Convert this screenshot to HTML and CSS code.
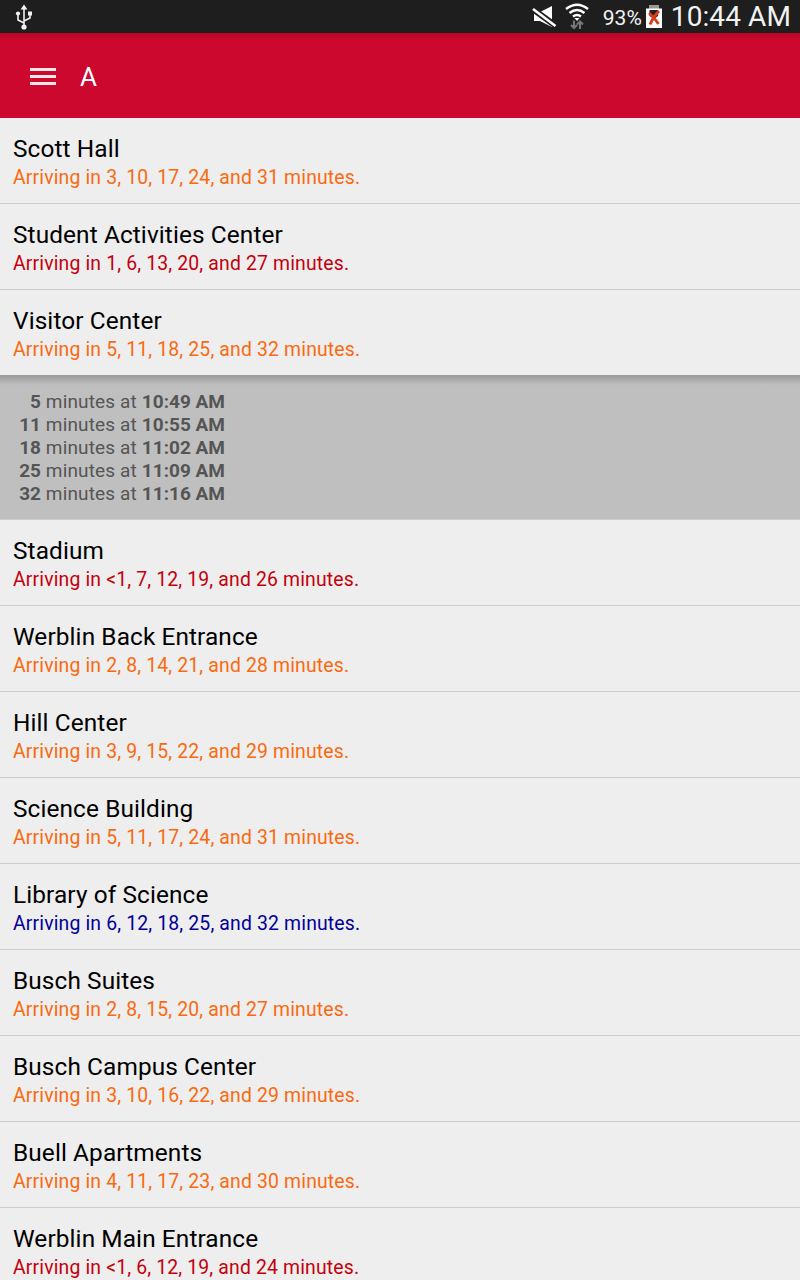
FILE: index.html
```
<!DOCTYPE html>
<html lang="en">
<head>
  <meta charset="utf-8">
  <title>A</title>
  <link rel="stylesheet" href="styles.css">
</head>
<body>
  <div class="status-bar">
    <svg class="usb" width="18" height="26" viewBox="0 0 18 26" fill="none" stroke="#f2f2f2" stroke-width="1.6">
      <path d="M9 4v18M9 19L3 16v-6M9 17l6-3v-5"/>
      <path d="M5.500 5.500L9 .5l3.500 5z" fill="#f2f2f2" stroke="none"/>
      <circle cx="3" cy="9.500" r="2.100" fill="#f2f2f2" stroke="none"/>
      <path d="M13 7.500h4v4h-4z" fill="#f2f2f2" stroke="none"/>
      <circle cx="9" cy="23" r="2.600" fill="#f2f2f2" stroke="none"/>
    </svg>
    <svg class="mute" width="26" height="24" viewBox="0 0 26 24">
      <path d="M3 7h6l12-6v21L9 16H3z" fill="#fff"/>
      <path d="M1 3.500l24 17.500" stroke="#1e1e1e" stroke-width="6"/>
      <path d="M2 4l22.500 17" stroke="#fff" stroke-width="2.600"/>
    </svg>
    <svg class="wifi" width="24" height="28" viewBox="0 0 24 28" fill="none" stroke="#fff" stroke-width="2.400">
      <path d="M1 6q11-8.500 22 0M4.500 10q7.500-6 15 0M8 13.500q4-3 8 0"/>
      <path d="M9.500 15h5L12 18z" fill="#fff" stroke="none"/>
      <path d="M9 17.500v7M6 22l3 3 3-3M15 26v-7M12 21.500l3-3 3 3" stroke="#777" stroke-width="2"/>
    </svg>
    <span class="percent">93%</span>
    <svg class="battery" width="16" height="24" viewBox="0 0 16 24">
      <path d="M3 0h10v4H3z" fill="#999"/>
      <path d="M0 3.500h16v19.500H0z" fill="#fff"/>
      <path d="M3.500 5h8.500v6l-4 3-4.500-3z" fill="#222"/>
      <path d="M3 8q6 5 9.500 11M13 6Q7 12 4 19.500" fill="none" stroke="#dc3a1c" stroke-width="2.800"/>
    </svg>
    <span class="clock">10:44 AM</span>
  </div>
  <div class="toolbar">
    <div class="menu-icon"><span></span><span></span><span></span></div>
    <h1>A</h1>
  </div>
  <ul class="stops">
    <li class="stop"><h2>Scott Hall</h2><p class="soon">Arriving in 3, 10, 17, 24, and 31 minutes.</p></li>
    <li class="stop"><h2>Student Activities Center</h2><p class="now">Arriving in 1, 6, 13, 20, and 27 minutes.</p></li>
    <li class="stop expanded"><h2>Visitor Center</h2><p class="soon">Arriving in 5, 11, 18, 25, and 32 minutes.</p></li>
    <li class="times">
      <div><b class="mins">5</b> minutes at <b>10:49 AM</b></div>
      <div><b class="mins">11</b> minutes at <b>10:55 AM</b></div>
      <div><b class="mins">18</b> minutes at <b>11:02 AM</b></div>
      <div><b class="mins">25</b> minutes at <b>11:09 AM</b></div>
      <div><b class="mins">32</b> minutes at <b>11:16 AM</b></div>
    </li>
    <li class="stop"><h2>Stadium</h2><p class="now">Arriving in &lt;1, 7, 12, 19, and 26 minutes.</p></li>
    <li class="stop"><h2>Werblin Back Entrance</h2><p class="soon">Arriving in 2, 8, 14, 21, and 28 minutes.</p></li>
    <li class="stop"><h2>Hill Center</h2><p class="soon">Arriving in 3, 9, 15, 22, and 29 minutes.</p></li>
    <li class="stop"><h2>Science Building</h2><p class="soon">Arriving in 5, 11, 17, 24, and 31 minutes.</p></li>
    <li class="stop"><h2>Library of Science</h2><p class="later">Arriving in 6, 12, 18, 25, and 32 minutes.</p></li>
    <li class="stop"><h2>Busch Suites</h2><p class="soon">Arriving in 2, 8, 15, 20, and 27 minutes.</p></li>
    <li class="stop"><h2>Busch Campus Center</h2><p class="soon">Arriving in 3, 10, 16, 22, and 29 minutes.</p></li>
    <li class="stop"><h2>Buell Apartments</h2><p class="soon">Arriving in 4, 11, 17, 23, and 30 minutes.</p></li>
    <li class="stop"><h2>Werblin Main Entrance</h2><p class="now">Arriving in &lt;1, 6, 12, 19, and 24 minutes.</p></li>
  </ul>
</body>
</html>
```
FILE: styles.css
```
* {
  box-sizing: border-box;
  margin: 0;
  padding: 0;
}

body {
  height: 1280px;
  overflow: hidden;
  background: #eee;
  color: #000;
  font-family: Roboto, sans-serif;
}

.status-bar {
  display: flex;
  align-items: center;
  height: 33px;
  padding: 0 9px 0 15px;
  background: #1e1e1e;
  color: #f2f2f2;
}

.mute {
  margin-left: auto;
}

.wifi {
  margin-left: 8px;
}

.percent {
  margin: 2px 0 0 14px;
  font-size: 21px;
}

.battery {
  margin-left: 4px;
}

.clock {
  margin-left: 9px;
  font-size: 28px;
  letter-spacing: 0.1px;
}

.toolbar {
  display: flex;
  align-items: center;
  height: 85px;
  padding-left: 30px;
  background: linear-gradient(#bd0629, #cc082e 8px);
  color: #fff;
}

.toolbar h1 {
  margin: 2px 0 0 24px;
  font-size: 26px;
  font-weight: 400;
}

.menu-icon {
  display: flex;
  flex-direction: column;
  gap: 4px;
  width: 26px;
  margin-top: 2px;
}

.menu-icon span {
  height: 3px;
  background: #fbe6ea;
}

.stops {
  list-style: none;
}

.stop {
  height: 86px;
  padding: 14px 13px 0;
  border-bottom: 1px solid #ccc;
}

.stop h2 {
  font-size: 24.4px;
  font-weight: 400;
  line-height: 34px;
  letter-spacing: 0.1px;
}

.stop p {
  font-size: 19.4px;
  line-height: 24px;
  letter-spacing: 0.16px;
}

.stop.expanded {
  height: 85px;
  border-bottom: none;
}

.soon {
  color: #f96a10;
}

.now {
  color: #c4000c;
}

.later {
  color: #009;
}

.times {
  height: 145px;
  padding: 15px 13px 0;
  border-bottom: 1px solid #ccc;
  background: linear-gradient(#999, #bfbfbf 10px);
  color: #555;
  font-size: 19px;
  line-height: 23px;
  letter-spacing: 0.15px;
}

.times b {
  letter-spacing: 0;
}

.mins {
  display: inline-block;
  width: 28px;
  text-align: right;
}
```
